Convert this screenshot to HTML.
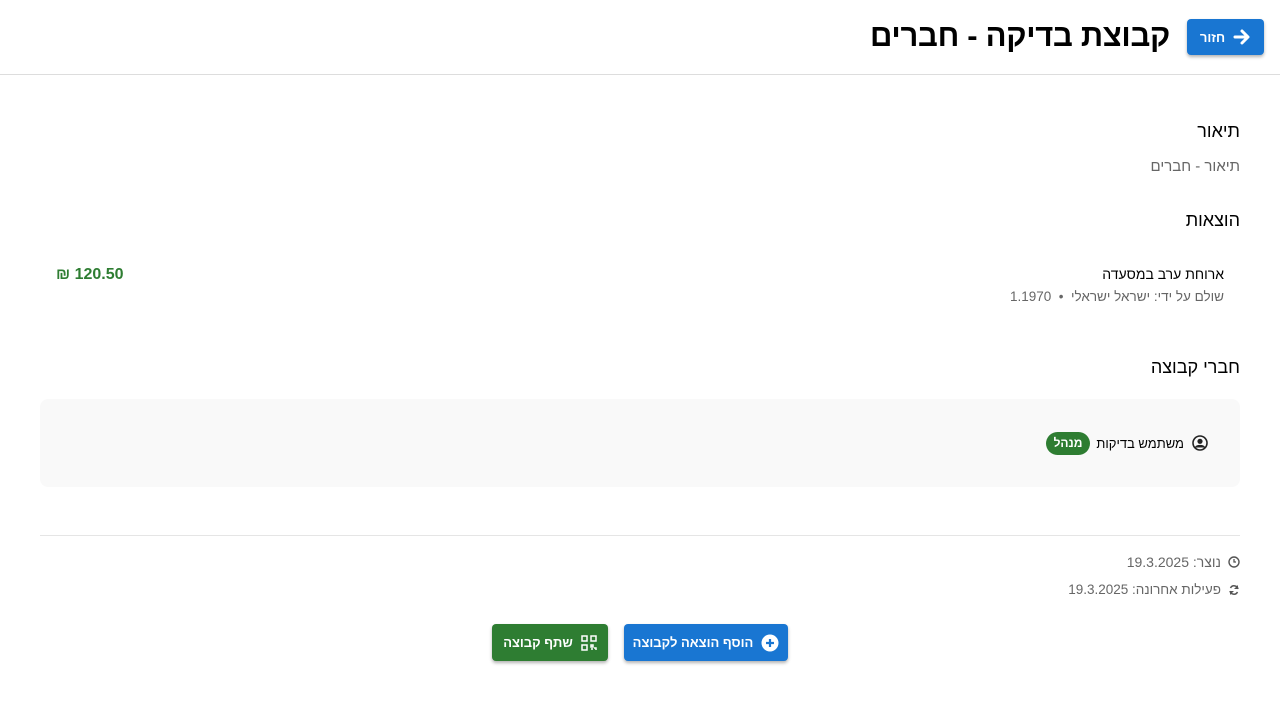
<!DOCTYPE html>
<html dir="rtl"><head><meta charset="utf-8"><style>
*{box-sizing:border-box;margin:0;padding:0}
body{width:1280px;height:720px;background:#fff;font-family:"Liberation Sans","Noto Sans CJK SC",sans-serif;color:#000;position:relative;overflow:hidden}
.abs{position:absolute}
.hdr{left:0;top:0;width:1280px;height:75px;border-bottom:1px solid #ddd}
.btn{position:absolute;border-radius:4px;color:#fff;font-weight:bold;font-size:13px;display:flex;align-items:center;justify-content:center;gap:8px;box-shadow:0 2px 3px rgba(0,0,0,.3)}
.blue{background:#1976d2}.green{background:#2e7d32}
h2{position:absolute;right:40px;font-size:18px;font-weight:normal}
.t{position:absolute;white-space:nowrap}
</style></head><body>
<div class="abs hdr"></div>
<div class="btn blue" style="left:1187px;top:19px;width:77px;height:36px">
<svg width="18" height="18" viewBox="0 0 18 18"><path d="M2 9H14M9 3l6 6-6 6" stroke="#fff" stroke-width="3" fill="none" stroke-linecap="round" stroke-linejoin="round"/></svg><span>חזור</span></div>
<div class="t" style="right:110px;top:18px;font-size:31px;font-weight:bold;letter-spacing:-0.3px">קבוצת בדיקה - חברים</div>

<h2 style="top:121px">תיאור</h2>
<div class="t" style="right:40px;top:158px;font-size:15px;color:#666">תיאור - חברים</div>
<h2 style="top:210px">הוצאות</h2>
<div class="t" style="right:56px;top:266px;font-size:14px">ארוחת ערב במסעדה</div>
<div class="t" style="right:56px;top:289px;font-size:13.5px;color:#666">שולם על ידי: ישראל ישראלי &nbsp;•&nbsp; 1.1970</div>
<div class="t" style="left:56px;top:266px;font-size:16px;font-weight:bold;color:#2e7d32" dir="ltr">₪ 120.50</div>
<h2 style="top:357px">חברי קבוצה</h2>
<div class="abs" style="left:40px;top:399px;width:1200px;height:88px;background:#f9f9f9;border-radius:8px"></div>
<svg class="abs" style="left:1192px;top:435px" width="16" height="16" viewBox="0 0 16 16"><circle cx="8" cy="8" r="7" fill="none" stroke="#222" stroke-width="1.6"/><circle cx="8" cy="6.3" r="2.6" fill="#222"/><path d="M3.5 12.5c1.5-2.5 7.5-2.5 9 0" fill="#222" stroke="#222" stroke-width="1.5"/></svg>
<div class="t" style="right:96px;top:436px;font-size:13px">משתמש בדיקות</div>
<div class="abs" style="left:1046px;top:432px;width:44px;height:23px;border-radius:12px;background:#2e7d32;color:#fff;font-size:12px;font-weight:bold;text-align:center;line-height:23px">מנהל</div>
<div class="abs" style="left:40px;top:535px;width:1200px;height:1px;background:#e5e5e5"></div>
<svg class="abs" style="left:1228px;top:556px" width="12" height="12" viewBox="0 0 12 12"><circle cx="6" cy="6" r="5" fill="none" stroke="#555" stroke-width="1.4"/><path d="M6 3v3h2" stroke="#555" stroke-width="1.3" fill="none"/></svg>
<div class="t" style="right:59px;top:554px;font-size:14px;color:#666">נוצר: 19.3.2025</div>
<svg class="abs" style="left:1228px;top:584px" width="12" height="12" viewBox="0 0 12 12"><path d="M10 5A4 4 0 0 0 2.5 4M2 7a4 4 0 0 0 7.5 1" stroke="#555" stroke-width="1.5" fill="none"/><path d="M10 1v4H6z" fill="#555"/><path d="M2 11V7h4z" fill="#555"/></svg>
<div class="t" style="right:59px;top:582px;font-size:13.5px;color:#666">פעילות אחרונה: 19.3.2025</div>
<div class="btn blue" style="left:624px;top:624px;width:164px;height:37px">
<svg width="18" height="18" viewBox="0 0 18 18"><circle cx="9" cy="9" r="8.5" fill="#fff"/><path d="M9 5v8M5 9h8" stroke="#1976d2" stroke-width="2.2"/></svg><span>הוסף הוצאה לקבוצה</span></div>
<div class="btn green" style="left:492px;top:624px;width:116px;height:37px">
<svg width="16" height="16" viewBox="0 0 16 16" fill="none" stroke="#fff" stroke-width="1.5"><rect x="1" y="1" width="5" height="5"/><rect x="10" y="1" width="5" height="5"/><rect x="1" y="10" width="5" height="5"/><path d="M10 10h2v2h-2zM13 13h2v2M10 14h2" /></svg><span>שתף קבוצה</span></div>
</body></html>
